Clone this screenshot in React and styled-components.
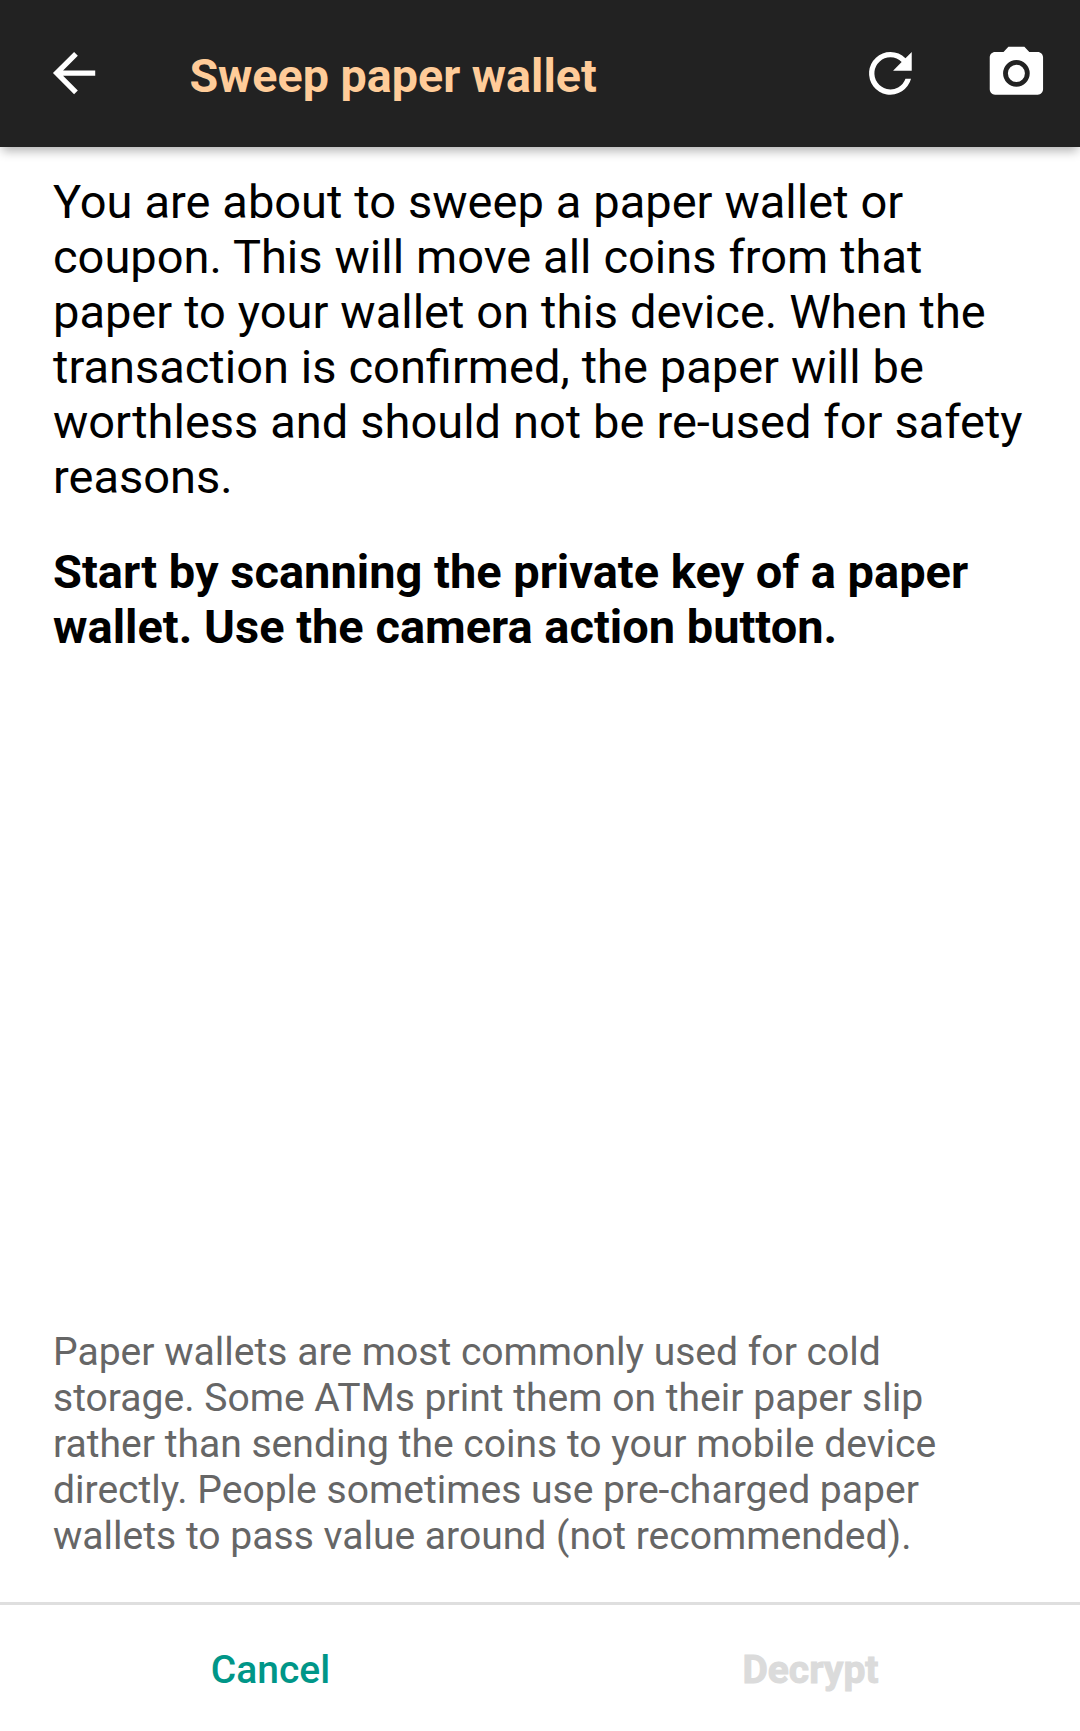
import React from 'react';
import styled, { createGlobalStyle } from 'styled-components';

const Global = createGlobalStyle`
  body { margin: 0; background: #fff; }
  * { box-sizing: border-box; }
`;
const Screen = styled.div`
  width: 1080px;
  height: 1731px;
  display: flex;
  flex-direction: column;
  font-family: Roboto, sans-serif;
  background: #fff;
  overflow: hidden;
`;
const Bar = styled.header`
  height: 147px;
  flex: none;
  display: flex;
  align-items: center;
  padding: 0 32px 1px 42px;
  background: #222;
  box-shadow: 0 6px 10px -2px rgba(0, 0, 0, 0.3);
`;
const IconButton = styled.button`
  border: 0;
  padding: 0;
  background: none;
  color: #fff;
  display: flex;
  margin-left: ${(p) => p.$gap || 0}px;
`;
const Title = styled.h1`
  margin: 6px auto 0 84px;
  font-size: 46.65px;
  line-height: 56px;
  font-weight: 700;
  color: #ffcc99;
`;
const Body = styled.main`
  flex: 1;
  display: flex;
  flex-direction: column;
  padding: 27px 48px 0 53px;
`;
const Text = styled.p`
  margin: 0 0 40px;
  font-size: ${(p) => (p.$bold ? 46.97 : 47)}px;
  line-height: 55px;
  font-weight: ${(p) => (p.$bold ? 700 : 400)};
  word-spacing: ${(p) => (p.$bold ? 0 : 0.3)}px;
  white-space: nowrap;
  color: #000;
`;
const Hint = styled.p`
  margin: auto 0 43px;
  font-size: 39.07px;
  line-height: 46px;
  color: #666;
`;
const Footer = styled.footer`
  flex: none;
  height: 129px;
  display: flex;
  border-top: 3px solid #dfdfdf;
`;
const Action = styled.button`
  flex: 1;
  border: 0;
  padding: 4px 0 0 1px;
  background: none;
  font: ${(p) => (p.disabled ? 700 : 500)} 39px Roboto, sans-serif;
  color: ${(p) => (p.disabled ? '#dbdbdb' : '#009688')};
  -webkit-text-stroke: ${(p) => (p.disabled ? 1 : 0)}px currentColor;
`;
const Icon = ({ d, size }) => (
  <svg width={size} height={size} viewBox="-0.15 -0.14 24 24" fill="currentColor"><path d={d} /></svg>
);

export default function App() {
  return (
    <Screen>
      <Global />
      <Bar>
        <IconButton aria-label="Back"><Icon size={63.4} d="M20 11H7.83l5.59-5.59L12 4l-8 8 8 8 1.41-1.41L7.83 13H20v-2z" /></IconButton>
        <Title>Sweep paper wallet</Title>
        <IconButton aria-label="Reload"><Icon size={64} d="M17.65 6.35A7.958 7.958 0 0 0 12 4a8 8 0 1 0 7.73 10h-2.08A6 6 0 1 1 12 6c1.66 0 3.14.69 4.22 1.78L13 11h7V4l-2.35 2.35z" /></IconButton>
        <IconButton aria-label="Scan" $gap={62}><Icon size={64} d="M9 2 7.17 4H4c-1.1 0-2 .9-2 2v12c0 1.1.9 2 2 2h16c1.1 0 2-.9 2-2V6c0-1.1-.9-2-2-2h-3.17L15 2H9zm3 15a5 5 0 1 1 0-10 5 5 0 0 1 0 10zm0-1.8a3.2 3.2 0 1 0 0-6.4 3.2 3.2 0 0 0 0 6.4z" /></IconButton>
      </Bar>
      <Body>
        <Text>You are about to sweep a paper wallet or<br />coupon. This will move all coins from that<br />paper to your wallet on this device. When the<br />transaction is confirmed, the paper will be<br />worthless and should not be re-used for safety<br />reasons.</Text>
        <Text $bold>Start by scanning the private key of a paper<br />wallet. Use the camera action button.</Text>
        <Hint>Paper wallets are most commonly used for cold<br />storage. Some ATMs print them on their paper slip<br />rather than sending the coins to your mobile device<br />directly. People sometimes use pre-charged paper<br />wallets to pass value around (not recommended).</Hint>
      </Body>
      <Footer>
        <Action>Cancel</Action>
        <Action disabled>Decrypt</Action>
      </Footer>
    </Screen>
  );
}
